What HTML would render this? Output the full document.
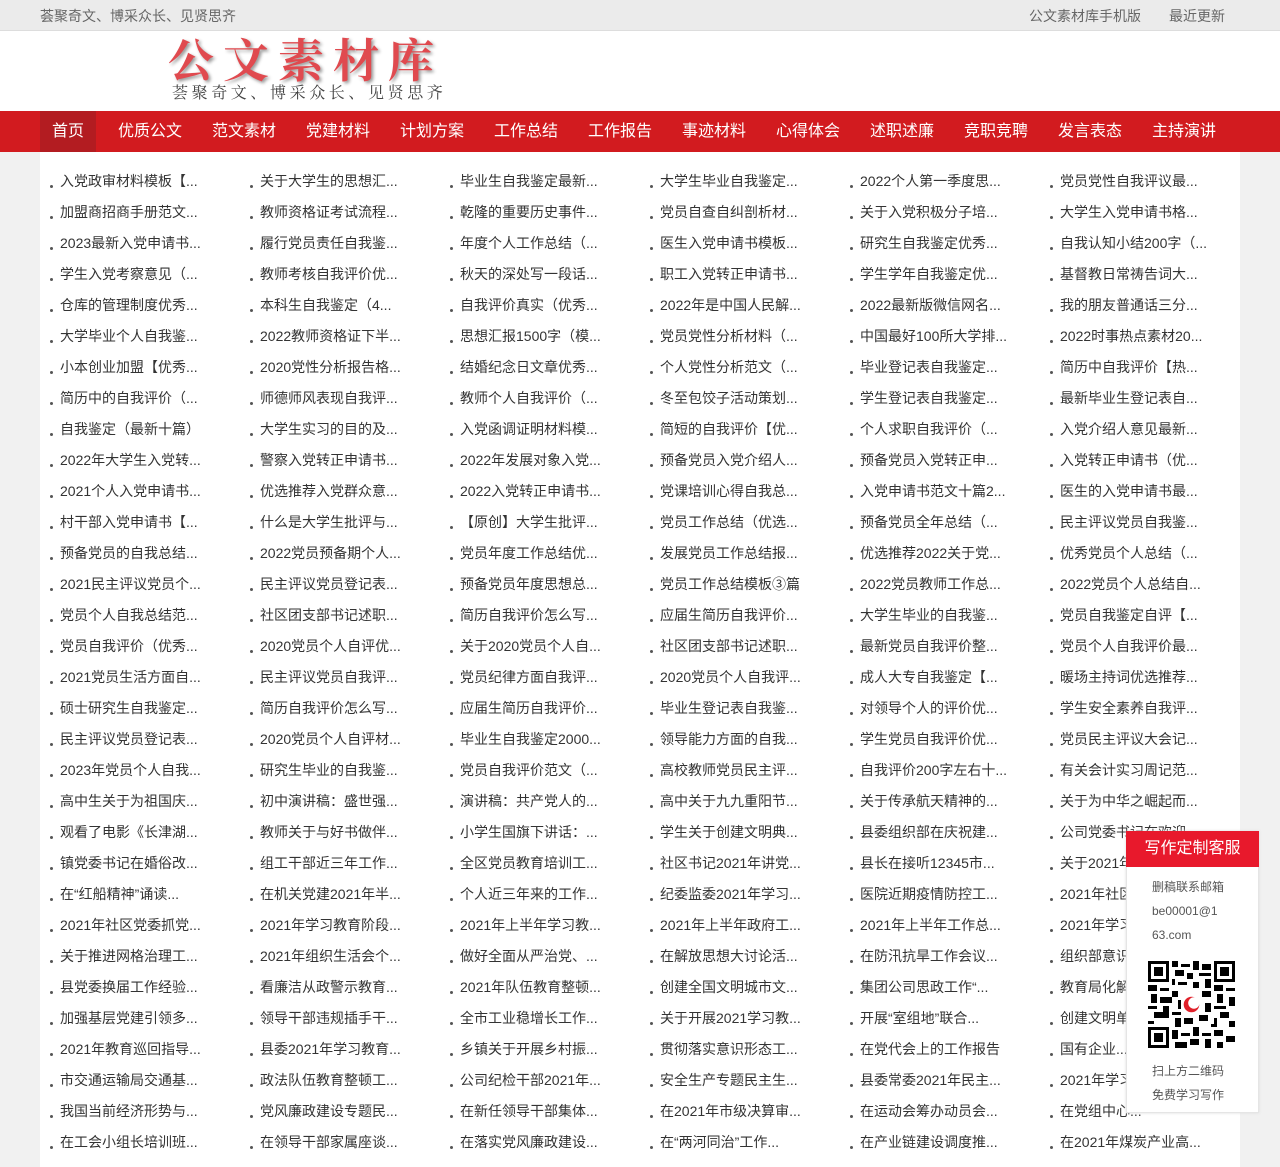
<!DOCTYPE html>
<html><head><meta charset="utf-8">
<style>
*{margin:0;padding:0;box-sizing:border-box}
body{width:1280px;height:1167px;overflow:hidden;background:#f1f1f1;font-family:"Liberation Sans","Noto Sans CJK SC",sans-serif;color:#333}
.top{height:31px;background:#ebebeb;border-bottom:1px solid #ddd;font-size:14px;color:#666;position:relative}
.top .l{position:absolute;left:40px;top:6px}
.top .r{position:absolute;right:55px;top:6px}
.top .r span{margin-left:28px}
.hd{height:80px;background:#fff;position:relative}
.logo{position:absolute;left:168px;top:-6px;font-family:"Noto Serif CJK SC","WenQuanYi Zen Hei",serif;font-size:46px;letter-spacing:9px;color:#e04a4f;text-shadow:2px 2px 3px #999;font-weight:bold}
.sub{position:absolute;left:172px;top:49px;font-family:"Noto Serif CJK SC",serif;font-size:16px;letter-spacing:3.6px;color:#444}
.nav{height:41px;background:#d21b1f;padding-left:40px;display:flex}
.nav a{display:block;height:41px;line-height:41px;color:#fff;font-size:16px;width:94px;text-align:center;text-decoration:none}
.nav a.on{background:#b31c21;width:56px;margin-right:7px}
.main{position:absolute;left:40px;top:152px;width:1200px;height:1015px;background:#fff;padding-top:14px}
.row{display:flex;height:31px}
.row span{width:200px;padding-left:20px;font-size:14px;line-height:31px;position:relative;white-space:nowrap;overflow:hidden}
.row span:before{content:"";position:absolute;left:10px;top:19px;width:3px;height:3px;border-radius:50%;background:#555}
.fl{position:absolute;left:1126px;top:831px;width:133px;height:282px;background:#fff;border:1px solid #e5e5e5;box-shadow:0 0 3px #ddd}
.fl .h{height:36px;background:#e8192c;color:#fff;font-size:16px;text-align:center;line-height:36px;margin:-1px -1px 0 -1px}
.fl p{font-size:12px;color:#555;padding-left:25px;line-height:24px}
</style></head><body>
<div class="top"><span class="l">荟聚奇文、博采众长、见贤思齐</span><span class="r"><span>公文素材库手机版</span><span>最近更新</span></span></div>
<div class="hd"><div class="logo">公文素材库</div><div class="sub">荟聚奇文、博采众长、见贤思齐</div></div>
<div class="nav"><a class="on">首页</a><a>优质公文</a><a>范文素材</a><a>党建材料</a><a>计划方案</a><a>工作总结</a><a>工作报告</a><a>事迹材料</a><a>心得体会</a><a>述职述廉</a><a>竞职竞聘</a><a>发言表态</a><a>主持演讲</a></div>
<div class="main">
<div class="row"><span>入党政审材料模板【...</span><span>关于大学生的思想汇...</span><span>毕业生自我鉴定最新...</span><span>大学生毕业自我鉴定...</span><span>2022个人第一季度思...</span><span>党员党性自我评议最...</span></div>
<div class="row"><span>加盟商招商手册范文...</span><span>教师资格证考试流程...</span><span>乾隆的重要历史事件...</span><span>党员自查自纠剖析材...</span><span>关于入党积极分子培...</span><span>大学生入党申请书格...</span></div>
<div class="row"><span>2023最新入党申请书...</span><span>履行党员责任自我鉴...</span><span>年度个人工作总结（...</span><span>医生入党申请书模板...</span><span>研究生自我鉴定优秀...</span><span>自我认知小结200字（...</span></div>
<div class="row"><span>学生入党考察意见（...</span><span>教师考核自我评价优...</span><span>秋天的深处写一段话...</span><span>职工入党转正申请书...</span><span>学生学年自我鉴定优...</span><span>基督教日常祷告词大...</span></div>
<div class="row"><span>仓库的管理制度优秀...</span><span>本科生自我鉴定（4...</span><span>自我评价真实（优秀...</span><span>2022年是中国人民解...</span><span>2022最新版微信网名...</span><span>我的朋友普通话三分...</span></div>
<div class="row"><span>大学毕业个人自我鉴...</span><span>2022教师资格证下半...</span><span>思想汇报1500字（模...</span><span>党员党性分析材料（...</span><span>中国最好100所大学排...</span><span>2022时事热点素材20...</span></div>
<div class="row"><span>小本创业加盟【优秀...</span><span>2020党性分析报告格...</span><span>结婚纪念日文章优秀...</span><span>个人党性分析范文（...</span><span>毕业登记表自我鉴定...</span><span>简历中自我评价【热...</span></div>
<div class="row"><span>简历中的自我评价（...</span><span>师德师风表现自我评...</span><span>教师个人自我评价（...</span><span>冬至包饺子活动策划...</span><span>学生登记表自我鉴定...</span><span>最新毕业生登记表自...</span></div>
<div class="row"><span>自我鉴定（最新十篇）</span><span>大学生实习的目的及...</span><span>入党函调证明材料模...</span><span>简短的自我评价【优...</span><span>个人求职自我评价（...</span><span>入党介绍人意见最新...</span></div>
<div class="row"><span>2022年大学生入党转...</span><span>警察入党转正申请书...</span><span>2022年发展对象入党...</span><span>预备党员入党介绍人...</span><span>预备党员入党转正申...</span><span>入党转正申请书（优...</span></div>
<div class="row"><span>2021个人入党申请书...</span><span>优选推荐入党群众意...</span><span>2022入党转正申请书...</span><span>党课培训心得自我总...</span><span>入党申请书范文十篇2...</span><span>医生的入党申请书最...</span></div>
<div class="row"><span>村干部入党申请书【...</span><span>什么是大学生批评与...</span><span>【原创】大学生批评...</span><span>党员工作总结（优选...</span><span>预备党员全年总结（...</span><span>民主评议党员自我鉴...</span></div>
<div class="row"><span>预备党员的自我总结...</span><span>2022党员预备期个人...</span><span>党员年度工作总结优...</span><span>发展党员工作总结报...</span><span>优选推荐2022关于党...</span><span>优秀党员个人总结（...</span></div>
<div class="row"><span>2021民主评议党员个...</span><span>民主评议党员登记表...</span><span>预备党员年度思想总...</span><span>党员工作总结模板③篇</span><span>2022党员教师工作总...</span><span>2022党员个人总结自...</span></div>
<div class="row"><span>党员个人自我总结范...</span><span>社区团支部书记述职...</span><span>简历自我评价怎么写...</span><span>应届生简历自我评价...</span><span>大学生毕业的自我鉴...</span><span>党员自我鉴定自评【...</span></div>
<div class="row"><span>党员自我评价（优秀...</span><span>2020党员个人自评优...</span><span>关于2020党员个人自...</span><span>社区团支部书记述职...</span><span>最新党员自我评价整...</span><span>党员个人自我评价最...</span></div>
<div class="row"><span>2021党员生活方面自...</span><span>民主评议党员自我评...</span><span>党员纪律方面自我评...</span><span>2020党员个人自我评...</span><span>成人大专自我鉴定【...</span><span>暖场主持词优选推荐...</span></div>
<div class="row"><span>硕士研究生自我鉴定...</span><span>简历自我评价怎么写...</span><span>应届生简历自我评价...</span><span>毕业生登记表自我鉴...</span><span>对领导个人的评价优...</span><span>学生安全素养自我评...</span></div>
<div class="row"><span>民主评议党员登记表...</span><span>2020党员个人自评材...</span><span>毕业生自我鉴定2000...</span><span>领导能力方面的自我...</span><span>学生党员自我评价优...</span><span>党员民主评议大会记...</span></div>
<div class="row"><span>2023年党员个人自我...</span><span>研究生毕业的自我鉴...</span><span>党员自我评价范文（...</span><span>高校教师党员民主评...</span><span>自我评价200字左右十...</span><span>有关会计实习周记范...</span></div>
<div class="row"><span>高中生关于为祖国庆...</span><span>初中演讲稿：盛世强...</span><span>演讲稿：共产党人的...</span><span>高中关于九九重阳节...</span><span>关于传承航天精神的...</span><span>关于为中华之崛起而...</span></div>
<div class="row"><span>观看了电影《长津湖...</span><span>教师关于与好书做伴...</span><span>小学生国旗下讲话：...</span><span>学生关于创建文明典...</span><span>县委组织部在庆祝建...</span><span>公司党委书记在欢迎...</span></div>
<div class="row"><span>镇党委书记在婚俗改...</span><span>组工干部近三年工作...</span><span>全区党员教育培训工...</span><span>社区书记2021年讲党...</span><span>县长在接听12345市...</span><span>关于2021年...</span></div>
<div class="row"><span>在“红船精神”诵读...</span><span>在机关党建2021年半...</span><span>个人近三年来的工作...</span><span>纪委监委2021年学习...</span><span>医院近期疫情防控工...</span><span>2021年社区...</span></div>
<div class="row"><span>2021年社区党委抓党...</span><span>2021年学习教育阶段...</span><span>2021年上半年学习教...</span><span>2021年上半年政府工...</span><span>2021年上半年工作总...</span><span>2021年学习...</span></div>
<div class="row"><span>关于推进网格治理工...</span><span>2021年组织生活会个...</span><span>做好全面从严治党、...</span><span>在解放思想大讨论活...</span><span>在防汛抗旱工作会议...</span><span>组织部意识...</span></div>
<div class="row"><span>县党委换届工作经验...</span><span>看廉洁从政警示教育...</span><span>2021年队伍教育整顿...</span><span>创建全国文明城市文...</span><span>集团公司思政工作“...</span><span>教育局化解...</span></div>
<div class="row"><span>加强基层党建引领多...</span><span>领导干部违规插手干...</span><span>全市工业稳增长工作...</span><span>关于开展2021学习教...</span><span>开展“室组地”联合...</span><span>创建文明单...</span></div>
<div class="row"><span>2021年教育巡回指导...</span><span>县委2021年学习教育...</span><span>乡镇关于开展乡村振...</span><span>贯彻落实意识形态工...</span><span>在党代会上的工作报告</span><span>国有企业...</span></div>
<div class="row"><span>市交通运输局交通基...</span><span>政法队伍教育整顿工...</span><span>公司纪检干部2021年...</span><span>安全生产专题民主生...</span><span>县委常委2021年民主...</span><span>2021年学习...</span></div>
<div class="row"><span>我国当前经济形势与...</span><span>党风廉政建设专题民...</span><span>在新任领导干部集体...</span><span>在2021年市级决算审...</span><span>在运动会筹办动员会...</span><span>在党组中心...</span></div>
<div class="row"><span>在工会小组长培训班...</span><span>在领导干部家属座谈...</span><span>在落实党风廉政建设...</span><span>在“两河同治”工作...</span><span>在产业链建设调度推...</span><span>在2021年煤炭产业高...</span></div>
</div>
<div class="fl">
<div class="h">写作定制客服</div>
<p style="margin-top:8px">删稿联系邮箱</p>
<p>be00001@1</p>
<p>63.com</p>
<svg style="position:absolute;left:21px;top:129px" width="87" height="87" viewBox="0 0 29 29">
<rect width="29" height="29" fill="#fff"/>
<g fill="#000">
<path d="M0 0h7v7H0zM22 0h7v7h-7zM0 22h7v7H0z"/>
<path d="M1 1h5v5H1zM23 1h5v5h-5zM1 23h5v5H1z" fill="#fff"/>
<path d="M2 2h3v3H2zM24 2h3v3h-3zM2 24h3v3H2z"/>
<path d="M8 0h2v2H8zM11 1h3v1h-3zM15 0h2v3h-2zM18 1h3v2h-3zM9 3h3v2H9zM13 4h2v2h-2zM17 4h4v1h-4zM8 6h1v2H8zM10 7h3v1h-3zM15 7h2v2h-2zM19 6h2v3h-2z"/>
<path d="M0 8h3v2H0zM4 9h3v1H4zM1 11h2v3H1zM4 12h4v2H4zM0 15h3v1H0zM2 17h5v2H2zM0 20h2v1H0zM5 15h2v2H5z"/>
<path d="M22 8h3v2h-3zM26 9h3v1h-3zM23 11h2v3h-2zM27 12h2v3h-2zM22 15h4v1h-4zM24 17h3v2h-3zM27 20h2v2h-2zM22 19h1v3h-1z"/>
<path d="M8 10h2v2H8zM10 13h2v3h-2zM8 17h3v1H8zM9 19h2v3H9zM18 10h3v2h-3zM19 14h2v3h-2zM17 18h3v2h-3zM12 19h3v2h-3z"/>
<path d="M8 23h2v3H8zM11 24h3v1h-3zM9 27h4v2H9zM15 22h2v3h-2zM14 26h3v2h-3zM18 24h3v1h-3zM19 26h2v3h-2zM22 23h3v2h-3zM26 25h3v2h-3zM23 27h2v2h-2zM21 21h2v1h-2z"/>
</g>
<rect x="11" y="11" width="7" height="7" fill="#fff"/>
<circle cx="14.5" cy="14.5" r="2.6" fill="#e0202a"/>
<circle cx="15.3" cy="14" r="1.9" fill="#fff"/>
</svg>
<p style="position:absolute;top:227px">扫上方二维码</p>
<p style="position:absolute;top:251px">免费学习写作</p>
</div>
</body></html>
